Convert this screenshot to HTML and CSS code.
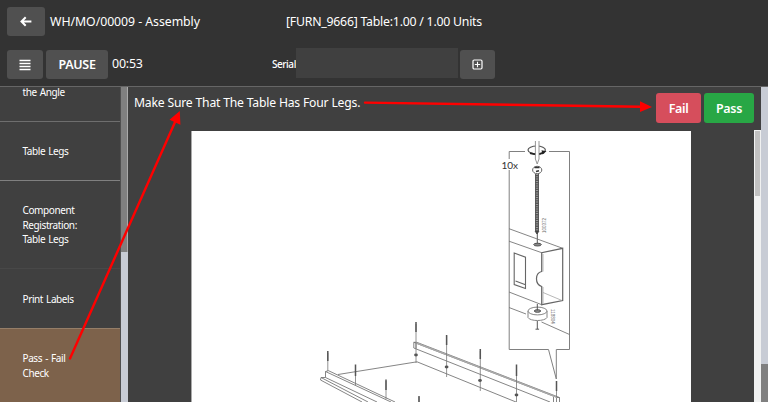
FILE: index.html
```html
<!DOCTYPE html>
<html lang="en">
<head>
<meta charset="utf-8">
<title>Assembly</title>
<link rel="stylesheet" href="styles.css">
</head>
<body>
<div class="app">
  <header class="header">
    <div class="row title-row">
      <button class="btn back" aria-label="Back"><svg width="14" height="12" viewBox="0 0 14 12"><path d="M6.700 1.300 2.500 5.500l4.200 4.200M3 5.500H12.400" fill="none" stroke="#fff" stroke-width="2"/></svg></button>
      <span class="order">WH/MO/00009 - Assembly</span>
      <span class="product">[FURN_9666] Table:1.00 / 1.00 Units</span>
    </div>
    <div class="row tool-row">
      <button class="btn menu" aria-label="Menu"><svg width="12" height="12" viewBox="0 0 12 12"><path d="M.5 1.500h11M.5 4.500h11M.5 7.500h11M.5 10.500h11" stroke="#fff" stroke-width="1.400"/></svg></button>
      <button class="btn pause">PAUSE</button>
      <span class="timer">00:53</span>
      <label class="serial">Serial</label>
      <input class="serial-input" type="text" aria-label="Serial">
      <button class="btn add" aria-label="Add"><svg width="12" height="12" viewBox="0 0 12 12"><rect x="1" y="1" width="9" height="9" rx="1.200" fill="none" stroke="#fff" stroke-width="1.200"/><path d="M2.800 5.500h5.400M5.500 2.800v5.400" stroke="#fff" stroke-width="1.100"/></svg></button>
    </div>
  </header>
  <main class="body">
    <nav class="steps">
      <div class="step first"><span>the Angle</span></div>
      <div class="step legs"><span>Table Legs</span></div>
      <div class="step component"><span>Component<br>Registration:<br>Table Legs</span></div>
      <div class="step labels"><span>Print Labels</span></div>
      <div class="step active"><span>Pass - Fail<br>Check</span></div>
    </nav>
    <div class="steps-scroll"><div class="thumb"></div></div>
    <section class="content">
      <div class="check-bar">
        <p class="instruction">Make Sure That The Table Has Four Legs.</p>
        <button class="verdict fail">Fail</button>
        <button class="verdict pass">Pass</button>
      </div>
      <div class="viewer">
        <div class="sheet">
          <svg class="drawing" width="499" height="271" viewBox="192 131 499 271" fill="none" stroke="#777" stroke-width=".9">
            <g stroke="#808080" stroke-width="1">
              <path d="M525 151.500H509.200V159M509.200 170V349.500H548.500L556.300 379V349.500H569.500V151.500H549"/>
            </g>
            <text class="count" x="501.500" y="169">10x</text>
            <ellipse cx="536.700" cy="150" rx="8.700" ry="4" stroke="#555" stroke-width="1.200"/>
            <path d="M530 153.200Q537 155.700 544 152.500" stroke="#222" stroke-width="1.800"/>
            <path d="m541.500 150.300 5 .9-4 3.400z" fill="#222" stroke="none"/>
            <path d="M535.400 141V159L537.200 164L539 159V141" fill="#fff" stroke="#888"/>
            <ellipse cx="537.200" cy="170" rx="4.600" ry="3.700" fill="#fff" stroke="#555"/>
            <path d="M534.500 167.500h5M536 171.500l3-.8" stroke="#333" stroke-width="1.400"/>
            <path d="M537 174V231" stroke="#555" stroke-width="4"/>
            <path d="M537 174V231" stroke="#999" stroke-width="2.200" stroke-dasharray="1 1.300"/>
            <path d="m535 231 2 3 2-3" fill="#444" stroke="#444"/>
            <path d="M537.300 233V244.500" stroke="#444"/>
            <text class="part" transform="translate(545.500 233) rotate(-90)">100372</text>
            <path d="M509 228.700 562.700 248.300M509 241.200 541.700 252.700M509 292 541.700 304.700M509 307.500 526 314M541.500 322 569.500 334.500"/>
            <path d="M541.700 252.700V271.500C535 273 534.500 284 541.700 286.500V304.700L562.700 300.500V248.300Z" stroke="#666" stroke-width="1.200"/>
            <path d="M543 254V271.500M543 287V303M543 292.500 562 300.500" stroke="#999" stroke-width=".7"/>
            <path d="M514.200 253 525.500 257.200V288.500L514.200 284.500ZM515.500 281 525.500 284.700" stroke="#666" stroke-width="1.100"/>
            <ellipse cx="537.500" cy="244.600" rx="3.800" ry="1.400" fill="#888" stroke="#444"/>
            <path d="M528 311V317.500C530 321.500 545 321.500 547 317.500V311" fill="#fff"/>
            <ellipse cx="537.500" cy="311" rx="9.500" ry="3.900" fill="#fff"/>
            <ellipse cx="537.500" cy="311" rx="3.200" ry="1.300" fill="#999" stroke="#444"/>
            <path d="M537.300 304V310.500M537.300 321V329M535.500 329.200h3.600" stroke="#444"/>
            <text class="part" transform="translate(550.500 309) rotate(90)">118804</text>

            <path d="M338 374.500 417 361.800 516 402"/>
            <path d="M413.800 342.300 557 397.500H559.500V402M413.800 342.300V348L550 402M413.800 342.300h3L559.500 397.500M416 343.500V348.500M553.500 397V402M556.500 398V402"/>
            <path d="M416 342.800 556 396.800" stroke="#aaa" stroke-width="1.300"/>
            <path d="M325.500 371.500 391 402M325.500 371.500V377.500M328.500 370.700 395 402M325.500 371.500l3-.8M325.500 377.500 377 402M325.500 377.500H321L320.500 380 362 402M321 377.500 368 402"/>
            <g stroke="#777" stroke-width=".8">
              <path d="M416 324V363M446.600 336V377M480.300 351V391M516.500 366V402M556.500 381V397M327.800 353V371M355.500 366V385M386 381V399M419 397V402"/>
            </g>
            <g stroke="#555" stroke-width="1.500">
              <path d="M416 322V332M446.600 335V345M480.300 349V359M516.500 364.500V376M556.500 381V391M327.800 351V361M355.500 364.500V376M386 379.500V390M419 396V402"/>
            </g>
            <g fill="#555" stroke="none">
              <ellipse cx="416" cy="355" rx="1.900" ry="1.400"/><ellipse cx="446.600" cy="367" rx="1.900" ry="1.400"/><ellipse cx="480" cy="380.500" rx="1.900" ry="1.400"/><ellipse cx="516.500" cy="395" rx="1.900" ry="1.400"/>
            </g>
          </svg>
        </div>
        <div class="viewer-scroll"><div class="thumb"></div></div>
      </div>
    </section>
    <div class="page-scroll"><div class="thumb"></div></div>
  </main>
  <svg class="arrows" width="768" height="402" viewBox="0 0 768 402">
    <g stroke="red" stroke-width="2.400" stroke-linecap="round"><path d="M70 358.500 175.500 121"/><path d="M365 102.600 641 106.700"/></g>
    <path d="M179.800 111 180.400 124.700 169.500 119.700ZM652 107 640 101.300V112Z" fill="red"/>
  </svg>
</div>
</body>
</html>
```
FILE: styles.css
```css
* { box-sizing: border-box; }
body { margin: 0; background: #333; color: #fff; font-family: "Noto Sans", "Open Sans", sans-serif; }
button, input { font: inherit; color: inherit; border: 0; padding: 0; margin: 0; }
span, label, p { white-space: nowrap; }
.app { position: relative; width: 768px; height: 402px; overflow: hidden; display: flex; flex-direction: column; }
.header { height: 86px; background: #333; padding: 7px 7px 0; }
.row { display: flex; align-items: center; }
.title-row { height: 29px; font-size: 12.3px; letter-spacing: -.05px; }
.tool-row { height: 31px; margin-top: 12px; align-items: flex-start; }
.btn { height: 29px; background: #505050; border-radius: 3px; display: flex; align-items: center; justify-content: center; flex: none; }
.back { width: 38px; }
.order { width: 236px; margin-left: 5px; }
.product { font-size: 12.3px; letter-spacing: -.23px; }
.menu { width: 36px; margin-top: 2px; }
.pause { width: 62px; margin: 2px 0 0 3px; font-size: 12.5px; font-weight: 600; letter-spacing: -.3px; }
.timer { width: 160px; margin-left: 4px; font-size: 12.4px; line-height: 31px; letter-spacing: -.2px; }
.serial { width: 24px; font-size: 10px; font-weight: 500; line-height: 33px; letter-spacing: -.45px; }
.serial-input { width: 162px; height: 30px; background: #404040; }
.add { width: 35px; margin: 2px 0 0 2px; }
.body { flex: 1; min-height: 0; display: flex; background: #404040; border-top: 1px solid #666; }
.steps { width: 121px; display: flex; flex-direction: column; font-size: 10px; letter-spacing: -.4px; word-spacing: .8px; line-height: 14.5px; border-right: 1px solid #505050; }
.step { display: flex; align-items: center; padding-left: 22.5px; border-bottom: 1px solid #6e6e6e; flex: none; }
.step span { position: relative; top: .6px; }
.first { height: 35px; align-items: flex-start; }
.first span { margin-top: -3px; }
.legs { height: 59px; border-color: #808080; }
.component { height: 88px; border-color: #484848; }
.labels { height: 60px; border-color: #957e68; }
.active { height: 74px; background: #7d624b; border: 0; }
.active span { top: -.4px; }
.steps-scroll { width: 7px; background: #c8ccd5; }
.steps-scroll .thumb { height: 165px; background: #808080; border-right: 1px solid #aaa; }
.content { flex: 1; display: flex; flex-direction: column; min-width: 0; }
.check-bar { height: 43px; display: flex; align-items: flex-start; padding: 6px 7px 0 6px; }
.instruction { flex: 1; margin: 0; font-size: 12.2px; line-height: 19px; letter-spacing: -.2px; }
.verdict { height: 30px; border-radius: 3px; font-size: 12.5px; font-weight: 600; letter-spacing: -.35px; }
.fail { width: 45px; background: #d64e5c; }
.pass { width: 50px; margin-left: 3px; background: #28a745; }
.viewer { flex: 1; min-height: 0; display: flex; padding-left: 63px; }
.sheet { width: 500px; margin-top: 1px; background: #fff; border-left: 1px solid #aaa; overflow: hidden; }
.drawing { display: block; }
.count { font: 10px Lato, sans-serif; fill: #333; stroke: none; }
.part { font: 4.5px "Liberation Sans", sans-serif; fill: #666; stroke: none; }
.viewer-scroll { width: 7px; margin-left: auto; padding: 1px; background: #f0f1f1; }
.viewer-scroll .thumb { height: 65px; background: #c1c1c1; }
.page-scroll { width: 7px; display: flex; flex-direction: column; background: #c8ccd5; }
.page-scroll .thumb { height: 38px; margin-top: auto; background: #808080; }
.arrows { position: absolute; left: 0; top: 0; pointer-events: none; }
```
